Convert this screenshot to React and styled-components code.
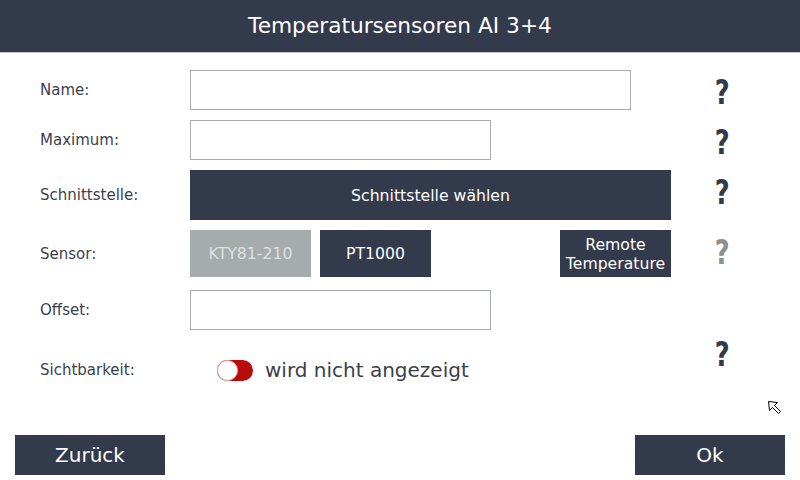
import React from "react";
import styled, { createGlobalStyle } from "styled-components";

const Global = createGlobalStyle`
  html, body { margin: 0; padding: 0; background: #fff; }
  body { font-family: "DejaVu Sans", "Liberation Sans", sans-serif; }
  * { box-sizing: border-box; }
`;

const DARK = "#323a4b";

const Screen = styled.div`
  position: relative;
  width: 800px;
  height: 480px;
  overflow: hidden;
  background: #fff;
  display: flex;
  flex-direction: column;
`;

const Header = styled.header`
  height: 53px;
  background: ${DARK};
  border-bottom: 1px solid #c9ccd2;
  display: flex;
  align-items: center;
  justify-content: center;
  color: #fff;
  font-size: 21.7px;
  padding-bottom: 1px;
`;

const Form = styled.div`
  display: grid;
  grid-template-columns: 150px 481px 101px;
  grid-auto-rows: auto;
  padding: 17px 0 0 40px;
  row-gap: 10px;
`;

const Label = styled.div`
  font-size: 15px;
  color: #3a3f4c;
  display: flex;
  align-items: center;
  height: ${(p) => p.h || 40}px;
  margin-top: ${(p) => p.mt || 0}px;
`;

const Cell = styled.div`
  display: flex;
  align-items: ${(p) => p.align || "stretch"};
  height: ${(p) => p.h || 40}px;
  margin-top: ${(p) => p.mt || 0}px;
`;

const Input = styled.div`
  width: ${(p) => p.w}px;
  height: 40px;
  border: 1px solid #a9adad;
  background: #fff;
`;

const WideButton = styled.div`
  flex: 1;
  background: ${DARK};
  color: #fff;
  font-size: 15.7px;
  display: flex;
  align-items: center;
  justify-content: center;
`;

const SensorButton = styled.div`
  width: ${(p) => p.w}px;
  height: 47px;
  background: ${(p) => (p.disabled ? "#a6abab" : DARK)};
  color: ${(p) => (p.disabled ? "#dde0e2" : "#fff")};
  font-size: 15.7px;
  line-height: 19px;
  display: flex;
  align-items: center;
  justify-content: center;
  text-align: center;
  margin-right: ${(p) => p.mr || 0}px;
  margin-left: ${(p) => (p.push ? "auto" : "0")};
`;

const Help = styled.div`
  display: flex;
  justify-content: center;
  align-items: ${(p) => p.align || "center"};
  height: ${(p) => p.h || 40}px;
  margin-top: ${(p) => p.mt || 0}px;
  padding-left: 2px;
  font-size: 33px;
  font-weight: bold;
  color: ${(p) => (p.muted ? "#8b908c" : DARK)};
  line-height: 1;
  transform: translateY(${(p) => p.dy || 0}px) scaleX(0.78);
`;

const ToggleWrap = styled.div`
  display: flex;
  align-items: center;
  gap: 12px;
  margin-left: 27px;
  font-size: 20px;
  color: #3a3f4c;
`;

const Toggle = styled.div`
  position: relative;
  width: 36px;
  height: 21px;
  border-radius: 11px;
  background: #b80b0b;
`;

const Knob = styled.div`
  position: absolute;
  left: 0;
  top: 0;
  width: 21px;
  height: 21px;
  border-radius: 50%;
  background: #fff;
  border: 1px solid #e8a6a6;
`;

const Footer = styled.div`
  margin-top: auto;
  display: flex;
  justify-content: space-between;
  padding: 0 15px 5px 15px;
`;

const FooterButton = styled.div`
  width: 150px;
  height: 40px;
  background: ${DARK};
  color: #fff;
  font-size: 20px;
  display: flex;
  align-items: center;
  justify-content: center;
`;

const Cursor = styled.svg`
  position: absolute;
  left: 767px;
  top: 400px;
`;

export default function App() {
  return (
    <>
      <Global />
      <Screen>
        <Header>Temperatursensoren AI 3+4</Header>
        <Form>
          <Label>Name:</Label>
          <Cell><Input w={441} /></Cell>
          <Help dy={2}>?</Help>

          <Label>Maximum:</Label>
          <Cell><Input w={301} /></Cell>
          <Help dy={2}>?</Help>

          <Label h={50}>Schnittstelle:</Label>
          <Cell h={50}><WideButton>Schnittstelle wählen</WideButton></Cell>
          <Help h={50} dy={-3}>?</Help>

          <Label h={47}>Sensor:</Label>
          <Cell h={47}>
            <SensorButton w={121} mr={9} disabled>KTY81-210</SensorButton>
            <SensorButton w={111}>PT1000</SensorButton>
            <SensorButton w={111} push>Remote<br />Temperature</SensorButton>
          </Cell>
          <Help h={47} muted dy={-1}>?</Help>

          <Label mt={3}>Offset:</Label>
          <Cell mt={3}><Input w={301} /></Cell>
          <div />

          <Label h={60}>Sichtbarkeit:</Label>
          <Cell h={60} align="center">
            <ToggleWrap>
              <Toggle><Knob /></Toggle>
              wird nicht angezeigt
            </ToggleWrap>
          </Cell>
          <Help h={60} align="flex-start" dy={-2}>?</Help>
        </Form>
        <Footer>
          <FooterButton>Zurück</FooterButton>
          <FooterButton>Ok</FooterButton>
        </Footer>
        <Cursor width="16" height="16" viewBox="0 0 16 16">
          <path d="M1.5 1.5 L10.5 2.5 L7.5 5.5 L13.5 11.5 L11.5 13.5 L5.5 7.5 L2.5 10.5 Z" fill="#fff" stroke="#000" strokeWidth="1" strokeLinejoin="miter" />
        </Cursor>
      </Screen>
    </>
  );
}
